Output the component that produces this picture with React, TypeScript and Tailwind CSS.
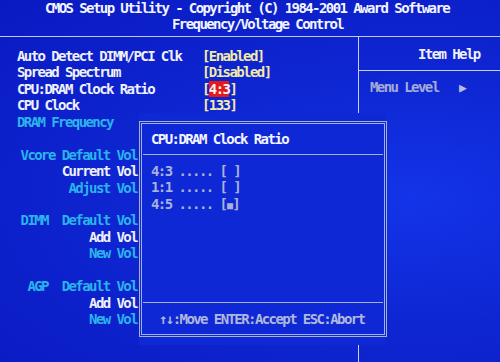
import React from "react";

const font = { fontFamily: '"DejaVu Sans Mono", "Liberation Mono", monospace' };

function Row({ children, className = "" }: { children?: React.ReactNode; className?: string }) {
  return <div className={`h-[16.44px] leading-[16.44px] whitespace-pre ${className}`}>{children}</div>;
}

export default function App() {
  const lower: [string, string][] = [
    ["Vcore Default Vol", "text-[#2ab4ec]"],
    ["Current Vol", "text-[#eef0fa]"],
    ["Adjust Vol", "text-[#2ab4ec]"],
    ["", ""],
    ["DIMM  Default Vol", "text-[#2ab4ec]"],
    ["Add Vol", "text-[#eef0fa]"],
    ["New Vol", "text-[#2ab4ec]"],
    ["", ""],
    ["AGP  Default Vol", "text-[#2ab4ec]"],
    ["Add Vol", "text-[#eef0fa]"],
    ["New Vol", "text-[#2ab4ec]"],
  ];
  return (
    <div
      className="relative w-[500px] h-[362px] overflow-hidden bg-[radial-gradient(ellipse_at_82%_55%,#1334e8_0%,#0e26d2_45%,#0a1ac2_100%)] text-[14px] font-bold tracking-[-1.58px]"
      style={font}
    >
      {/* Header */}
      <div className="h-[37px] border-b border-[#c0c8ee] text-[#f2f4ff]">
        <div className="pl-[45px] pt-[1px] leading-[14px] whitespace-pre">CMOS Setup Utility - Copyright (C) 1984-2001 Award Software</div>
        <div className="pl-[172px] mt-[2px] leading-[14px] whitespace-pre">Frequency/Voltage Control</div>
      </div>

      {/* Main */}
      <div className="flex h-[325px]">
        <div className="w-[358px] pt-[11px]">
          <div className="flex">
            <div className="w-[202px] pl-[17px] text-[#eef0fa]">
              <Row>Auto Detect DIMM/PCI Clk</Row>
              <Row>Spread Spectrum</Row>
              <Row>CPU:DRAM Clock Ratio</Row>
              <Row>CPU Clock</Row>
              <Row className="text-[#2ab4ec]">DRAM Frequency</Row>
            </div>
            <div className="text-[#f2eaa8]">
              <Row>[Enabled]</Row>
              <Row>[Disabled]</Row>
              <Row>
                [<span className="inline-block h-[16px] leading-[16px] bg-[#e21a1a] text-[#fff4f0]">4:3</span>]
              </Row>
              <Row>[133]</Row>
              <Row></Row>
            </div>
          </div>
          <Row></Row>
          <div className="w-[137px] text-right">
            {lower.map(([t, c], i) => (
              <Row key={i} className={c}>
                {t}
              </Row>
            ))}
          </div>
        </div>
        <div className="flex-1 border-l border-[#c8d0f0]">
          <div className="h-[34px] border-b border-[#c8d0f0] pl-[59px] pt-[9px] text-[#eef0fa]">
            <Row>Item Help</Row>
          </div>
          <div className="pl-[11px] pt-[8px] text-[#a4acd6]">
            <Row>
              Menu Level{"   "}
              <span className="text-[13px] text-[#b4bce0]">▶</span>
            </Row>
          </div>
        </div>
      </div>

      {/* Popup */}
      <div className="absolute left-[139px] top-[113px] w-[248px] py-[8px] bg-[#0e28d6]">
        <div className="h-[216px] border-[3px] border-double border-[#a4b0dc] flex flex-col">
          <div className="h-[30px] pl-[9px] pt-[7px] text-[#f2f4ff]">
            <Row>CPU:DRAM Clock Ratio</Row>
          </div>
          <div className="h-px mx-[1px] bg-[#a4b0dc]" />
          <div className="pl-[9px] pt-[8px] text-[#a8b2dc]">
            <Row>4:3 ..... [ ]</Row>
            <Row>1:1 ..... [ ]</Row>
            <Row>
              4:5 ..... [<span className="inline-block w-[6px] text-center text-[10px]">■</span>]
            </Row>
          </div>
          <div className="flex-1" />
          <div className="h-px mx-[1px] bg-[#a4b0dc]" />
          <div className="pl-[17px] pt-[8px] pb-[7px] text-[#b0b8dc]">
            <Row>↑↓:Move ENTER:Accept ESC:Abort</Row>
          </div>
        </div>
      </div>
    </div>
  );
}
